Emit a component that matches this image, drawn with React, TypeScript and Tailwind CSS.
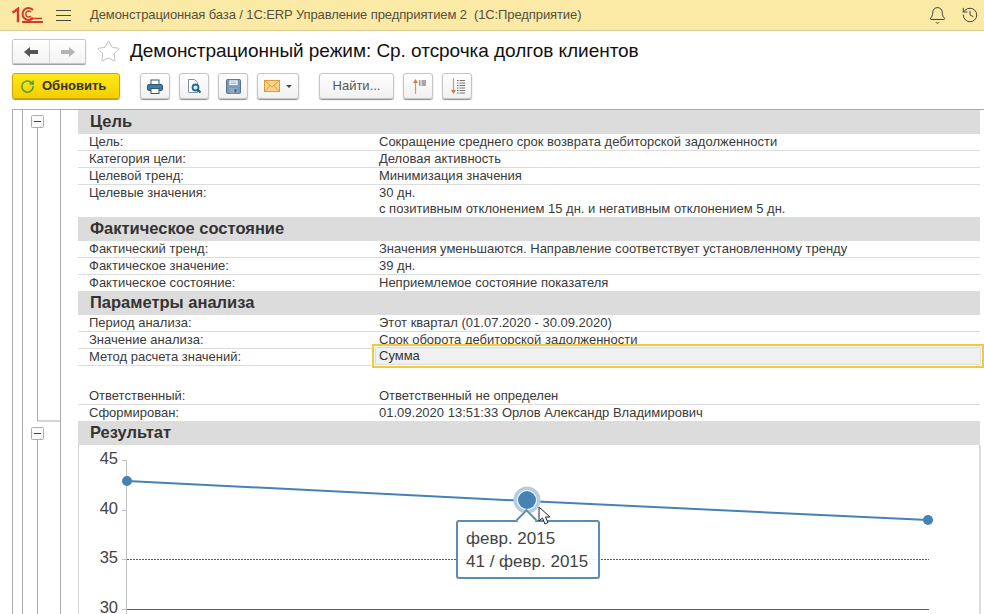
import React from "react";
import { Bell, History, Star, RotateCw } from "lucide-react";

const Logo1C = () => (
  <svg width="31" height="16" viewBox="0 0 31 16" fill="none" stroke="#d0392b" strokeWidth="2">
    <path d="M1.5 5 L6 1.8 V14" strokeWidth="2.4" strokeLinecap="square" />
    <path d="M21 3 A6 6 0 1 0 21 11" />
    <path d="M19 5 A3 3 0 1 0 19 9" strokeWidth="1.4" />
    <path d="M10 15 H31" />
    <path d="M18 11.5 H30" strokeWidth="1.6" />
  </svg>
);

const IconArrow = ({ dir, color }: { dir: "left" | "right"; color: string }) => (
  <svg width="14" height="12" viewBox="0 0 14 12" fill={color}>
    {dir === "left" ? <path d="M0 6 L6 1 V4 H14 V8 H6 V11 Z" /> : <path d="M14 6 L8 1 V4 H0 V8 H8 V11 Z" />}
  </svg>
);

const IconPrint = () => (
  <svg width="16" height="15" viewBox="0 0 16 15" fill="none">
    <rect x="4" y="1" width="8" height="5" fill="#fff" stroke="#33586f" />
    <rect x="0.5" y="5.5" width="15" height="6" rx="1.5" fill="#3d7dad" stroke="#33586f" />
    <rect x="4" y="9.5" width="8" height="5" fill="#fff" stroke="#33586f" />
  </svg>
);

const IconPreview = () => (
  <svg width="16" height="16" viewBox="0 0 16 16" fill="none">
    <path d="M2.5 1.5 H8.5 L11.5 4.5 V14.5 H2.5 Z" fill="#fff" stroke="#7d93a3" />
    <circle cx="9.5" cy="9.5" r="3" fill="#d8ecf7" stroke="#1e6b96" strokeWidth="1.8" />
    <path d="M11.5 11.5 L14.5 14.5" stroke="#1e5f85" strokeWidth="2.2" />
  </svg>
);

const IconSave = () => (
  <svg width="15" height="15" viewBox="0 0 15 15">
    <rect x="0.5" y="0.5" width="14" height="14" rx="1" fill="#6f9cc5" stroke="#58718a" />
    <rect x="3" y="1" width="9" height="5.5" fill="#eef3f7" stroke="#7d93a3" strokeWidth="0.6" />
    <path d="M4.5 3 H10.5 M4.5 4.6 H10.5" stroke="#9db0be" strokeWidth="0.8" />
    <rect x="3.5" y="9" width="8" height="5.5" fill="#9aa7b2" />
    <rect x="8.5" y="10" width="2" height="3.5" fill="#4f6478" />
  </svg>
);

const IconMail = () => (
  <svg width="16" height="12" viewBox="0 0 16 12" fill="#f6d58a" stroke="#dd9d3c">
    <rect x="0.5" y="0.5" width="15" height="11" />
    <path d="M0.5 0.5 L8 7 L15.5 0.5 M0.5 11.5 L6 5.5 M15.5 11.5 L10 5.5" fill="none" />
  </svg>
);

const IconSortUp = () => (
  <svg width="16" height="17" viewBox="0 0 16 17" fill="none">
    <path d="M5.5 16 V2" stroke="#dd9670" strokeWidth="1.2" />
    <path d="M3 5 L5.5 1 L8 5 Z" fill="#d9764a" />
    <path d="M9 3 H10.5 M9 5 H10.5 M9 7 H10.5" stroke="#444" />
    <path d="M11.5 3 H16 M11.5 5 H16 M11.5 7 H16" stroke="#555" />
  </svg>
);

const IconSortDown = () => (
  <svg width="16" height="17" viewBox="0 0 16 17" fill="none">
    <path d="M4.5 0 V14" stroke="#dd9670" strokeWidth="1.2" />
    <path d="M2 12 L4.5 16 L7 12 Z" fill="#d9764a" />
    <path d="M8 2.5 H9.5 M8 5 H9.5 M8 7.5 H9.5 M8 10 H9.5 M8 12.5 H9.5 M8 15 H9.5" stroke="#666" />
    <path d="M10.5 2.5 H16 M10.5 5 H16 M10.5 7.5 H16 M10.5 10 H16 M10.5 12.5 H16 M10.5 15 H16" stroke="#777" />
  </svg>
);

const ToolButton = ({ className, children }: { className: string; children: React.ReactNode }) => (
  <button className={`h-[26px] flex items-center justify-center rounded-[3px] border border-[#c4c4c4] bg-gradient-to-b from-white to-[#f1f1f1] shadow-[0_1px_1px_#8f8f8f] ${className}`}>
    {children}
  </button>
);

const Section = ({ title }: { title: string }) => (
  <div className="h-[24px] bg-[#dcdcdc] pl-3 text-[16.5px] leading-[23px] font-bold text-[#333]">{title}</div>
);

const Row = ({ label, value, extra, last }: { label: string; value: string; extra?: string; last?: boolean }) => (
  <div className={`flex pl-[11px] text-[13px] leading-[16px] text-[#3a3a3a] ${last ? "" : "border-b border-[#dcdcdc]"}`}>
    <div className="w-[290px] shrink-0">{label}</div>
    <div>
      <div>{value}</div>
      {extra && <div>{extra}</div>}
    </div>
  </div>
);

// дерево группировок слева от отчета
const TreeGutter = () => (
  <svg width="66" height="504" viewBox="0 0 66 504" fill="none" stroke="#ababab" className="shrink-0">
    <path d="M0.5 0 V504 M10.5 0 V504 M48.5 0 V504" />
    <path d="M25.5 17 V311 H48.5" />
    <path d="M25.5 329 V504" />
    <rect x="19.5" y="5.5" width="12" height="12" rx="1" fill="#fafafa" />
    <path d="M22 11.5 H29" stroke="#444" />
    <rect x="19.5" y="317.5" width="12" height="12" rx="1" fill="#fafafa" />
    <path d="M22 323.5 H29" stroke="#444" />
  </svg>
);

const Chart = () => (
  <div className="relative h-[169px] mr-[3px] border-l border-r-2 border-l-[#d2d2d2] border-r-[#dcdcdc] bg-white overflow-hidden">
    <svg width="900" height="169" viewBox="0 0 900 169" fill="none" style={{ fontFamily: "'Liberation Sans', Arial, sans-serif" }}>
      <g fontSize="16.5" fill="#444" textAnchor="end">
        <text x="39" y="19">45</text>
        <text x="39" y="69">40</text>
        <text x="39" y="118">35</text>
        <text x="39" y="168">30</text>
      </g>
      <path d="M47.5 15 V169" stroke="#c2c2c2" />
      <path d="M43 15.5 H48 M43 65.5 H48 M43 114.5 H48 M43 164.5 H48" stroke="#c2c2c2" />
      <path d="M48 114.5 H850" stroke="#c0304a" strokeDasharray="2 1" />
      <path d="M48 164.5 H850" stroke="#2e7d32" />
      <path d="M48 36 L448 56 L849 75" stroke="#4682b4" strokeWidth="2" />
      <circle cx="48" cy="36" r="5" fill="#4682b4" />
      <circle cx="849" cy="75" r="5" fill="#4682b4" />
      <circle cx="448" cy="55" r="13.5" fill="#b5cde1" />
      <circle cx="448" cy="55" r="10" fill="#fff" />
      <circle cx="448" cy="55" r="9" fill="#4682b4" />
    </svg>
    <div className="absolute left-[377px] top-[75px] w-[144px] h-[59px] rounded-[3px] border-2 border-[#5a8db6] bg-white/90 pl-[8px] pt-[5px] text-[17px] leading-[23px] text-[#444]">
      <div>февр. 2015</div>
      <div>41 / февр. 2015</div>
      <div className="absolute left-[61px] top-[-10px] w-[15px] h-[15px] rotate-45 border-l-2 border-t-2 border-[#5a8db6] bg-white" />
    </div>
    <svg width="14" height="20" viewBox="0 0 14 20" className="absolute left-[459px] top-[61px]">
      <path d="M1 1 V15 L4.5 12 L7 18 L10 16.5 L7.5 11 H12 Z" fill="#fff" stroke="#222" strokeWidth="1" />
    </svg>
  </div>
);

export default function App() {
  return (
    <div className="w-[984px] h-[614px] overflow-hidden bg-white text-[#333]" style={{ fontFamily: "'Liberation Sans', Arial, sans-serif" }}>
      {/* ШАПКА */}
      <header className="h-[31px] bg-[#fbe9a6] border-b border-[#d8cb94] flex items-center">
        <div className="ml-3 w-[32px]"><Logo1C /></div>
        <div className="ml-[12px] w-[15px] h-[11px] border-y border-[#4a4a3a] flex items-center">
          <div className="w-full h-px bg-[#4a4a3a]" />
        </div>
        <div className="ml-[19px] text-[13px] text-[#55503c] tracking-[-0.1px] whitespace-pre">Демонстрационная база / 1С:ERP Управление предприятием 2  (1С:Предприятие)</div>
        <div className="ml-auto flex items-center gap-[14px] pr-[5px]">
          <Bell size={19} strokeWidth={1.2} color="#333" />
          <History size={18} strokeWidth={1.2} color="#333" />
        </div>
      </header>

      {/* ЗАГОЛОВОК */}
      <div className="h-[25px] mt-[8px] pl-3 flex items-center">
        <div className="w-[74px] h-[25px] flex rounded-[2px] border border-[#c8c8c8] shadow-[0_1px_1px_#999] bg-gradient-to-b from-white to-[#f3f3f3]">
          <div className="w-[37px] flex items-center justify-center border-r border-[#d8d8d8]"><IconArrow dir="left" color="#555" /></div>
          <div className="flex-1 flex items-center justify-center"><IconArrow dir="right" color="#b4b4b4" /></div>
        </div>
        <Star size={25} strokeWidth={0.8} color="#b5b5b5" className="ml-[10px]" />
        <h1 className="ml-[9px] text-[19px] text-[#111] tracking-[-0.04px]">Демонстрационный режим: Ср. отсрочка долгов клиентов</h1>
      </div>

      {/* КОМАНДНАЯ ПАНЕЛЬ */}
      <div className="h-[26px] mt-[9px] pl-3 flex items-center">
        <button className="w-[108px] h-[26px] flex items-center pl-[7px] rounded-[3px] border border-[#c9a900] bg-gradient-to-b from-[#ffe81a] to-[#f2cf00] shadow-[0_1px_1px_#8f8f8f] text-[13px] font-bold text-[#333]">
          <RotateCw size={15} strokeWidth={2.4} color="#4f9e2f" />
          <span className="ml-[7px]">Обновить</span>
        </button>
        <ToolButton className="ml-[20px] w-[30px]"><IconPrint /></ToolButton>
        <ToolButton className="ml-[9px] w-[30px]"><IconPreview /></ToolButton>
        <ToolButton className="ml-[9px] w-[30px]"><IconSave /></ToolButton>
        <ToolButton className="ml-[9px] w-[42px] gap-[6px]">
          <IconMail />
          <span className="w-0 h-0 border-x-[3px] border-x-transparent border-t-[3px] border-t-[#444]" />
        </ToolButton>
        <ToolButton className="ml-[20px] w-[75px] text-[13px] text-[#555]">Найти...</ToolButton>
        <ToolButton className="ml-[9px] w-[30px]"><IconSortUp /></ToolButton>
        <ToolButton className="ml-[9px] w-[30px]"><IconSortDown /></ToolButton>
      </div>

      {/* ОТЧЕТ */}
      <div className="mt-[10px] ml-3 flex border-t border-[#ababab]">
        <TreeGutter />
        <div className="flex-1 min-w-0 relative">
          <div className="pr-[4px]">
            <Section title="Цель" />
            <Row label="Цель:" value="Сокращение среднего срок возврата дебиторской задолженности" />
            <Row label="Категория цели:" value="Деловая активность" />
            <Row label="Целевой тренд:" value="Минимизация значения" />
            <Row label="Целевые значения:" value="30 дн." extra="с позитивным отклонением 15 дн. и негативным отклонением 5 дн." last />
            <Section title="Фактическое состояние" />
            <Row label="Фактический тренд:" value="Значения уменьшаются. Направление соответствует установленному тренду" />
            <Row label="Фактическое значение:" value="39 дн." />
            <Row label="Фактическое состояние:" value="Неприемлемое состояние показателя" last />
            <Section title="Параметры анализа" />
            <Row label="Период анализа:" value="Этот квартал (01.07.2020 - 30.09.2020)" />
            <Row label="Значение анализа:" value="Срок оборота дебиторской задолженности" />
            <Row label="Метод расчета значений:" value="Сумма" />
            <div className="h-[22px]" />
            <Row label="Ответственный:" value="Ответственный не определен" />
            <Row label="Сформирован:" value="01.09.2020 13:51:33 Орлов Александр Владимирович" last />
            <Section title="Результат" />
          </div>
          <Chart />
          {/* выделенная ячейка поверх строки */}
          <div className="absolute left-[294px] right-0 top-[234px] h-[24px] border-2 border-[#f0c93c] bg-white p-px">
            <div className="h-full bg-[#f0f0f0] border border-[#dcdcdc] pl-[3px] text-[13px] leading-[16px] text-[#333]">Сумма</div>
          </div>
        </div>
      </div>
    </div>
  );
}
